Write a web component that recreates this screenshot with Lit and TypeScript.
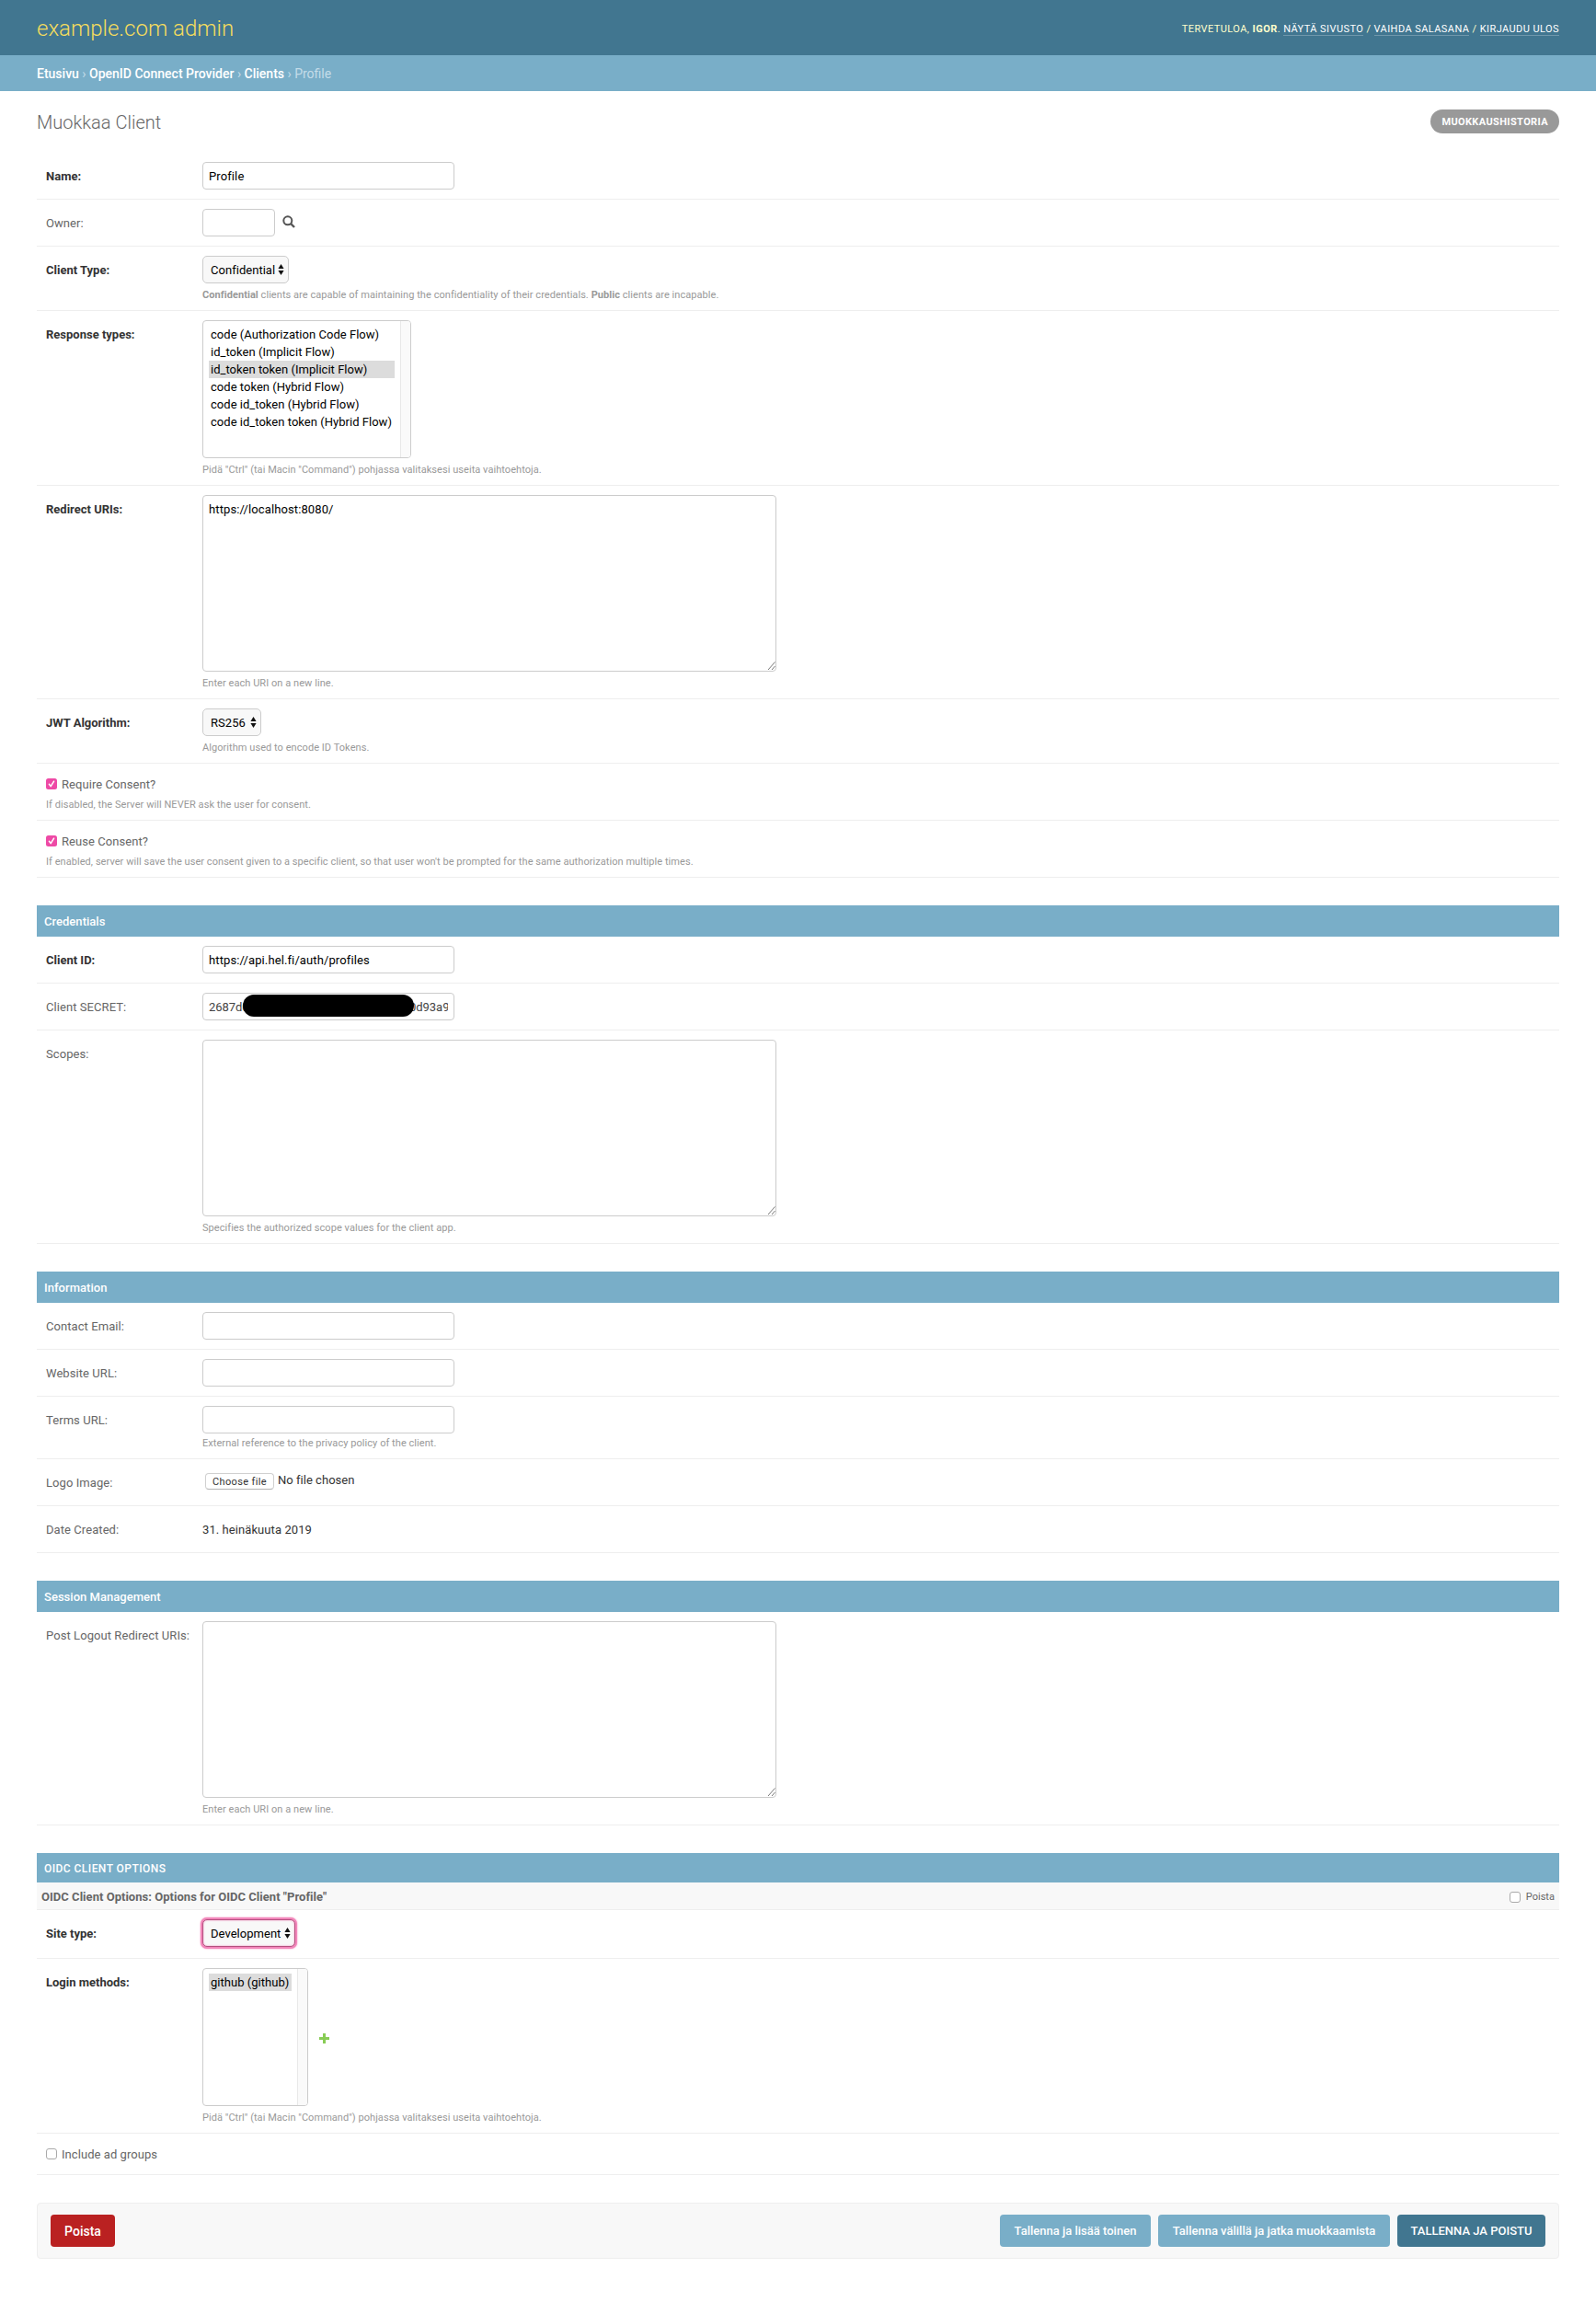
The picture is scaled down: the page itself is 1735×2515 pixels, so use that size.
import { LitElement, html, css, svg, nothing, TemplateResult } from "lit";
import { customElement } from "lit/decorators.js";
import { classMap } from "lit/directives/class-map.js";

interface Option {
  text: string;
  selected?: boolean;
}

const RESPONSE_TYPES: Option[] = [
  { text: "code (Authorization Code Flow)" },
  { text: "id_token (Implicit Flow)" },
  { text: "id_token token (Implicit Flow)", selected: true },
  { text: "code token (Hybrid Flow)" },
  { text: "code id_token (Hybrid Flow)" },
  { text: "code id_token token (Hybrid Flow)" },
];

const MULTI_HELP =
  'Pidä "Ctrl" (tai Macin "Command") pohjassa valitaksesi useita vaihtoehtoja.';

@customElement("app-root")
export class AppRoot extends LitElement {
  static styles = css`
    :host {
      display: block;
      min-height: 2515px;
      background: #fff;
      color: #333;
      font: 400 13px/20px Roboto, "Liberation Sans", sans-serif;
    }
    * {
      box-sizing: border-box;
    }
    .header {
      display: flex;
      justify-content: space-between;
      align-items: center;
      height: 60px;
      padding: 2px 40px 0;
      background: #417690;
      color: #ffc;
    }
    .brand {
      font-size: 24px;
      font-weight: 300;
      line-height: 30px;
      color: #f5dd5d;
    }
    .tools {
      font-size: 11px;
      line-height: 15px;
      letter-spacing: 0.43px;
      text-transform: uppercase;
    }
    .tools a {
      color: #fff;
      border-bottom: 1px solid rgba(255, 255, 255, 0.25);
    }
    .crumbs {
      height: 39px;
      padding: 0 40px;
      background: #79aec8;
      color: #c4dce8;
      font-size: 14px;
      line-height: 40px;
    }
    .crumbs a {
      color: #fff;
      font-weight: 500;
    }
    .content {
      padding: 20px 40px 60px;
    }
    .titlebar {
      display: flex;
      justify-content: space-between;
      align-items: flex-start;
      height: 47px;
    }
    .titlebar h1 {
      margin: 0;
      font-size: 20px;
      font-weight: 300;
      line-height: 28px;
      color: #666;
    }
    .history {
      height: 26px;
      padding: 0 12px;
      border-radius: 13px;
      background: #999;
      color: #fff;
      font-size: 11px;
      font-weight: 700;
      line-height: 27px;
      letter-spacing: 0.38px;
      text-transform: uppercase;
    }
    .module {
      margin-bottom: 30px;
      letter-spacing: 0.03px;
    }
    .module h2 {
      margin: 0;
      height: 34px;
      padding: 0 8px;
      background: #79aec8;
      color: #fff;
      font-size: 13px;
      font-weight: 500;
      line-height: 35px;
    }
    .module h2.upper {
      height: 32px;
      font-size: 12px;
      line-height: 34px;
      font-weight: 500;
      letter-spacing: 0.45px;
    }
    .sub {
      display: flex;
      justify-content: space-between;
      align-items: center;
      height: 30px;
      padding: 3px 5px 0;
      border-bottom: 1px solid #eee;
      background: #f8f8f8;
      color: #666;
      font-weight: 700;
    }
    .sub label {
      display: flex;
      align-items: center;
      gap: 6px;
      font-size: 11px;
      font-weight: 400;
    }
    .row {
      display: flex;
      padding: 10px;
      border-bottom: 1px solid #eee;
    }
    .row.last-gap {
      padding-bottom: 12px;
    }
    .label {
      flex: none;
      width: 170px;
      line-height: 31px;
      height: 30px;
      color: #666;
      white-space: nowrap;
      letter-spacing: 0.07px;
    }
    .label.required {
      font-weight: 700;
      color: #333;
      letter-spacing: 0;
    }
    .inline {
      display: flex;
      align-items: center;
    }
    .help {
      height: 13px;
      margin-top: 6px;
      font-size: 11px;
      line-height: 14px;
      letter-spacing: 0.055px;
      color: #999;
    }
    .help.close {
      margin-top: 4px;
    }
    .text,
    .area {
      display: block;
      margin: 0;
      border: 1px solid #ccc;
      border-radius: 4px;
      background: #fff;
      color: #000;
      font: inherit;
      letter-spacing: 0.11px;
      outline: none;
    }
    .text {
      width: 274px;
      height: 30px;
      padding: 1px 6px 0;
    }
    .text.short {
      width: 79px;
    }
    .text.muted {
      color: #444;
      letter-spacing: -0.04px;
    }
    .area {
      width: 624px;
      height: 192px;
      padding: 5px 6px;
      resize: none;
    }
    .overlay-host {
      position: relative;
      width: max-content;
    }
    .grip {
      position: absolute;
      right: 1px;
      bottom: 1px;
    }
    .redact {
      position: absolute;
      left: 44px;
      top: 2px;
      width: 186px;
      height: 24px;
      border-radius: 12px;
      background: #000;
    }
    .lens {
      margin: -2px 0 0 8px;
    }
    .plus {
      margin: 2px 0 0 12px;
    }
    .select {
      display: flex;
      align-items: center;
      justify-content: space-between;
      width: max-content;
      height: 30px;
      padding: 1px 4px 0 8px;
      border: 1px solid #ccc;
      border-radius: 5px;
      background: #f8f8f8;
      color: #000;
    }
    .select svg {
      margin-top: -2px;
    }
    .select.w94 {
      width: 94px;
    }
    .select.w64 {
      width: 64px;
    }
    .select.w101 {
      width: 101px;
    }
    .select.focus {
      border-color: #b3507f;
      box-shadow: 0 0 0 2px #f286ba, 0 0 2px 2px #f286ba, inset 0 0 2px #f286ba;
    }
    .list {
      display: flex;
      height: 150px;
      border: 1px solid #ccc;
      border-radius: 4px;
      background: #fff;
      color: #000;
      overflow: hidden;
    }
    .list.wide {
      width: 227px;
    }
    .list.narrow {
      width: 115px;
    }
    .options {
      flex: 1;
      padding: 5px 6px;
    }
    .option {
      height: 19px;
      padding: 0 2px;
      line-height: 20px;
      white-space: nowrap;
    }
    .option.selected {
      background: #dcdcdc;
    }
    .track {
      width: 11px;
      border-left: 1px solid #e8e8e8;
      background: #fafafa;
    }
    .row.check {
      display: block;
      height: 62px;
      padding: 12px 10px 0;
    }
    .row.check.plain {
      height: 45px;
    }
    .check label {
      display: flex;
      align-items: center;
      gap: 5px;
      height: 20px;
      color: #666;
      letter-spacing: 0.06px;
    }
    .check label span {
      padding-top: 2px;
    }
    .check svg,
    .sub svg {
      display: block;
    }
    .file {
      display: flex;
      align-items: flex-start;
      padding: 5px 0 0 3px;
      height: 30px;
    }
    .file button {
      width: 75px;
      height: 18px;
      padding: 1px 0 0;
      border: 1px solid #d0d0d0;
      border-bottom-color: #b4b4b4;
      border-radius: 4px;
      background: #fff;
      color: #333;
      font: 400 11px/16px Roboto, sans-serif;
      letter-spacing: 0.35px;
    }
    .file span {
      margin-left: 4px;
      line-height: 15px;
    }
    .value {
      height: 30px;
      line-height: 31px;
      letter-spacing: 0.08px;
    }
    .submit {
      display: flex;
      align-items: center;
      height: 61px;
      padding: 0 14px;
      border: 1px solid #eee;
      border-radius: 4px;
      background: #f8f8f8;
    }
    .btn {
      height: 35px;
      margin-left: 8px;
      padding: 0;
      border: 0;
      border-radius: 4px;
      background: #79aec8;
      color: #fff;
      font: 500 13px/35px Roboto, sans-serif;
      text-align: center;
    }
    .btn.delete {
      width: 70px;
      margin: 0 auto 0 0;
      padding-top: 1px;
      background: #ba2121;
      font-size: 14px;
    }
    .btn.add {
      width: 164px;
    }
    .btn.cont {
      width: 252px;
    }
    .btn.save {
      width: 161px;
      background: #417690;
    }
  `;

  private row(
    label: string,
    body: TemplateResult,
    required = false,
    extra = ""
  ): TemplateResult {
    return html`<div class="row ${extra}">
      <div class=${classMap({ label: true, required })}>${label}</div>
      <div>${body}</div>
    </div>`;
  }

  private area(value: string, help: string) {
    return html`<div class="overlay-host">
        <textarea class="area" .value=${value}></textarea>
        <svg class="grip" width="9" height="13" viewBox="0 0 9 13">
          <path d="M1 12 8.5 3.5M5 12 8.5 8" stroke="#777" stroke-width="1" fill="none" />
        </svg>
      </div>
      <div class="help">${help}</div>`;
  }

  private select(value: string, size: string, focus = false) {
    return html`<div class="select ${size} ${focus ? "focus" : ""}" role="listbox">
      <span>${value}</span>
      <svg width="7" height="12" viewBox="0 0 7 12">
        <path d="M3.5 0 6.6 5H.4zM3.5 12 6.6 7H.4z" fill="#111" />
      </svg>
    </div>`;
  }

  private list(options: Option[], size: string) {
    return html`<div class="list ${size}">
      <div class="options">
        ${options.map(
          (o) =>
            html`<div class=${classMap({ option: true, selected: !!o.selected })}>${o.text}</div>`
        )}
      </div>
      <div class="track"></div>
    </div>`;
  }

  private box(checked: boolean) {
    return html`<svg width="12" height="12" viewBox="0 0 12 12">
      ${checked
        ? svg`<rect width="12" height="12" rx="2.5" fill="#ee4aa6" />
            <path d="M3.4 6.3 5.2 8.6 8.6 3.2" fill="none" stroke="#fff" stroke-width="1.5" stroke-linecap="round" stroke-linejoin="round" />`
        : svg`<rect x=".5" y=".5" width="11" height="11" rx="2.5" fill="#fff" stroke="#aaa" />`}
    </svg>`;
  }

  private check(label: string, checked: boolean, help = "") {
    return html`<div class="row check ${help ? "" : "plain"}">
      <label>${this.box(checked)}<span>${label}</span></label>
      ${help ? html`<div class="help">${help}</div>` : nothing}
    </div>`;
  }

  private input(value = "", cls = "") {
    return html`<input class="text ${cls}" .value=${value} />`;
  }

  render() {
    return html`
      <header class="header">
        <div class="brand">example.com admin</div>
        <div class="tools">
          Tervetuloa, <strong>Igor</strong>. <a>Näytä sivusto</a> /
          <a>Vaihda salasana</a> / <a>Kirjaudu ulos</a>
        </div>
      </header>
      <nav class="crumbs">
        <a>Etusivu</a> › <a>OpenID Connect Provider</a> › <a>Clients</a> › Profile
      </nav>
      <main class="content">
        <div class="titlebar">
          <h1>Muokkaa Client</h1>
          <a class="history">Muokkaushistoria</a>
        </div>

        <section class="module">
          ${this.row("Name:", this.input("Profile"), true)}
          ${this.row(
            "Owner:",
            html`<div class="inline">
              ${this.input("", "short")}
              <svg class="lens" width="14" height="14" viewBox="0 0 14 14">
                <circle cx="5.8" cy="5.8" r="4.5" fill="none" stroke="#555" stroke-width="2" />
                <path d="m9 9 4 4" stroke="#555" stroke-width="2.4" />
              </svg>
            </div>`
          )}
          ${this.row(
            "Client Type:",
            html`${this.select("Confidential", "w94")}
              <div class="help">
                <b>Confidential</b> clients are capable of maintaining the confidentiality of
                their credentials. <b>Public</b> clients are incapable.
              </div>`,
            true
          )}
          ${this.row(
            "Response types:",
            html`${this.list(RESPONSE_TYPES, "wide")}
              <div class="help">${MULTI_HELP}</div>`,
            true
          )}
          ${this.row(
            "Redirect URIs:",
            this.area("https://localhost:8080/", "Enter each URI on a new line."),
            true
          )}
          ${this.row(
            "JWT Algorithm:",
            html`${this.select("RS256", "w64")}
              <div class="help">Algorithm used to encode ID Tokens.</div>`,
            true
          )}
          ${this.check(
            "Require Consent?",
            true,
            "If disabled, the Server will NEVER ask the user for consent."
          )}
          ${this.check(
            "Reuse Consent?",
            true,
            "If enabled, server will save the user consent given to a specific client, so that user won't be prompted for the same authorization multiple times."
          )}
        </section>

        <section class="module">
          <h2>Credentials</h2>
          ${this.row("Client ID:", this.input("https://api.hel.fi/auth/profiles"), true)}
          ${this.row(
            "Client SECRET:",
            html`<div class="overlay-host">
              ${this.input("2687d00000000000000000000000000d93a9", "muted")}
              <div class="redact"></div>
            </div>`
          )}
          ${this.row(
            "Scopes:",
            this.area("", "Specifies the authorized scope values for the client app.")
          )}
        </section>

        <section class="module">
          <h2>Information</h2>
          ${this.row("Contact Email:", this.input())}
          ${this.row("Website URL:", this.input())}
          ${this.row(
            "Terms URL:",
            html`${this.input()}
              <div class="help close">External reference to the privacy policy of the client.</div>`
          )}
          ${this.row(
            "Logo Image:",
            html`<div class="file"><button>Choose file</button><span>No file chosen</span></div>`
          )}
          ${this.row("Date Created:", html`<div class="value">31. heinäkuuta 2019</div>`)}
        </section>

        <section class="module">
          <h2>Session Management</h2>
          ${this.row("Post Logout Redirect URIs:", this.area("", "Enter each URI on a new line."))}
        </section>

        <section class="module">
          <h2 class="upper">OIDC CLIENT OPTIONS</h2>
          <div class="sub">
            <span>OIDC Client Options: Options for OIDC Client "Profile"</span>
            <label>${this.box(false)}<span>Poista</span></label>
          </div>
          ${this.row("Site type:", this.select("Development", "w101", true), true, "last-gap")}
          ${this.row(
            "Login methods:",
            html`<div class="inline">
                ${this.list([{ text: "github (github)", selected: true }], "narrow")}
                <svg class="plus" width="11" height="11" viewBox="0 0 11 11">
                  <path d="M4 0h3v4h4v3H7v4H4V7H0V4h4z" fill="#8c5" />
                </svg>
              </div>
              <div class="help">${MULTI_HELP}</div>`,
            true
          )}
          ${this.check("Include ad groups", false)}
        </section>

        <div class="submit">
          <button class="btn delete">Poista</button>
          <button class="btn add">Tallenna ja lisää toinen</button>
          <button class="btn cont">Tallenna välillä ja jatka muokkaamista</button>
          <button class="btn save">TALLENNA JA POISTU</button>
        </div>
      </main>
    `;
  }
}
